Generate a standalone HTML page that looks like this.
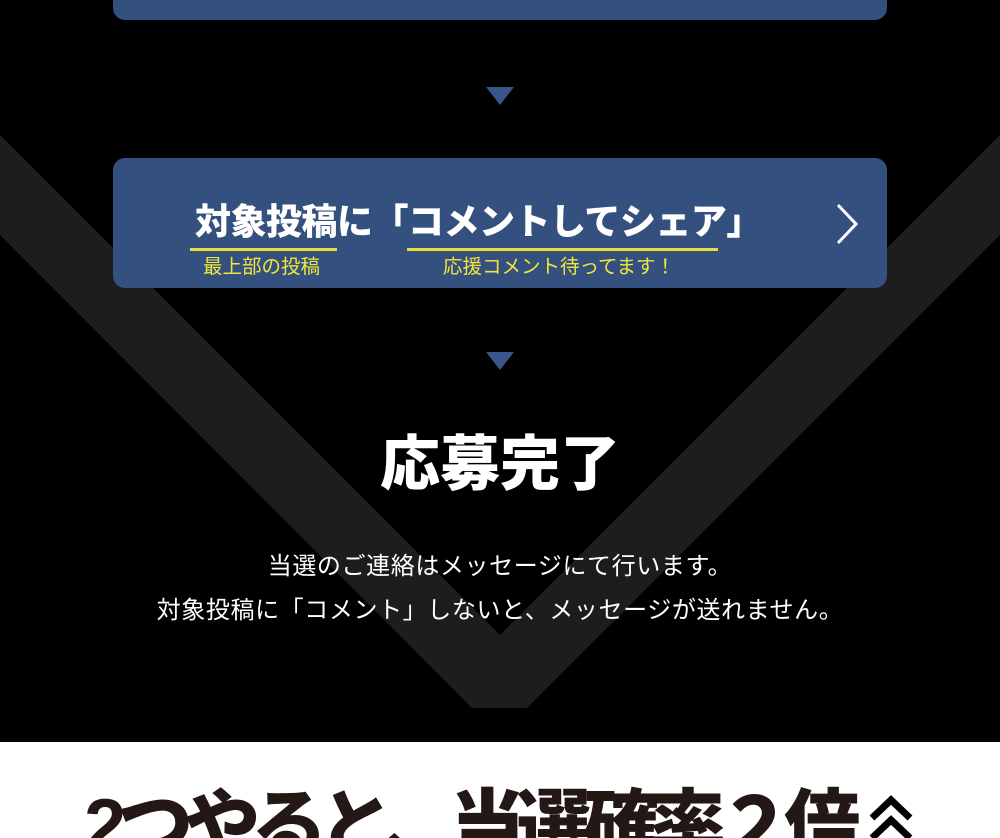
<!DOCTYPE html>
<html><head><meta charset="utf-8"><style>
*{margin:0;padding:0;box-sizing:border-box}
html,body{width:1000px;height:838px;overflow:hidden}
body{background:#000;position:relative;font-family:"Liberation Sans","Noto Sans CJK JP",sans-serif}
.abs{position:absolute}
.box{position:absolute;left:113px;width:774px;background:#34507f;border-radius:12px}
.tri{position:absolute;left:486px;width:0;height:0;border-left:14px solid transparent;border-right:14px solid transparent;border-top:18px solid #3a5688}
.t{white-space:nowrap;line-height:1}
</style></head><body>
<svg class="abs" style="left:0;top:0" width="1000" height="838">
<polygon points="0,135 500,635 1000,135 1000,235 527,708 472,708 0,235" fill="#1d1d1d"/>
</svg>
<div class="box" style="top:-20px;height:40px"></div>
<div class="tri" style="top:87px"></div>
<div class="box" style="top:158px;height:130px"></div>
<div class="abs t" style="left:195px;top:204px;font-size:36px;font-weight:900;color:#fff;letter-spacing:-0.5px">対象投稿に「コメントしてシェア」</div>
<div class="abs" style="left:190px;top:248px;width:147px;height:3px;background:#e8dc3a"></div>
<div class="abs" style="left:407px;top:248px;width:311px;height:3px;background:#e8dc3a"></div>
<div class="abs t" style="left:203px;top:258px;font-size:19.5px;color:#f2e63a">最上部の投稿</div>
<div class="abs t" style="left:443px;top:258px;font-size:19.5px;color:#f2e63a">応援コメント待ってます！</div>
<svg class="abs" style="left:834px;top:202px" width="28" height="44"><polyline points="4,3 22,22 4,41" fill="none" stroke="#fff" stroke-width="3"/></svg>
<div class="tri" style="top:352px"></div>
<div class="abs t" style="left:0;width:1000px;text-align:center;top:435px;font-size:60px;font-weight:900;color:#fff">応募完了</div>
<div class="abs t" style="left:0;width:1000px;text-align:center;top:555px;font-size:24px;color:#fff;letter-spacing:0.6px">当選のご連絡はメッセージにて行います。</div>
<div class="abs t" style="left:0;width:1000px;text-align:center;top:599px;font-size:24px;color:#fff;letter-spacing:0.6px">対象投稿に「コメント」しないと、メッセージが送れません。</div>
<div class="abs" style="left:0;top:742px;width:1000px;height:96px;background:#fff"></div>
<div class="abs t" style="left:84px;top:789px;font-size:76px;font-weight:900;color:#231815;letter-spacing:-9px">2つやると、当選確率２倍</div>
<svg class="abs" style="left:868px;top:794px" width="46" height="44"><polyline points="4,24 23,6 42,24" fill="none" stroke="#000" stroke-width="7"/><polyline points="4,44 23,26 42,44" fill="none" stroke="#000" stroke-width="7"/></svg>
</body></html>
